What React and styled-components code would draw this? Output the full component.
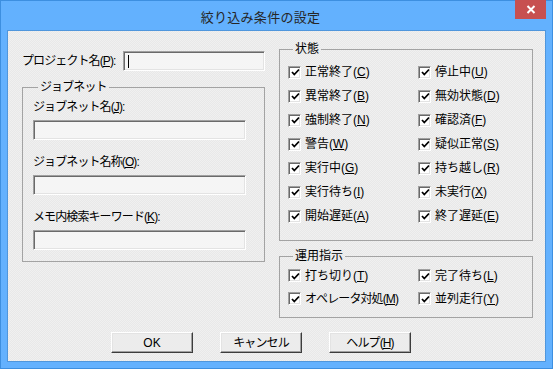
import React from 'react';
import styled, { createGlobalStyle } from 'styled-components';

const GlobalStyle = createGlobalStyle`
  body {
    margin: 0;
    font-family: "Liberation Sans", "Noto Sans CJK JP", sans-serif;
    font-size: 12px;
    color: #000;
  }
`;

const statusItems = [
  ['正常終了', 'C'],
  ['停止中', 'U'],
  ['異常終了', 'B'],
  ['無効状態', 'D'],
  ['強制終了', 'N'],
  ['確認済', 'F'],
  ['警告', 'W'],
  ['疑似正常', 'S'],
  ['実行中', 'G'],
  ['持ち越し', 'R'],
  ['実行待ち', 'I'],
  ['未実行', 'X'],
  ['開始遅延', 'A'],
  ['終了遅延', 'E']
];

const opItems = [
  ['打ち切り', 'T'],
  ['完了待ち', 'L'],
  ['オペレータ対処', 'M', true],
  ['並列走行', 'Y']
];

function Check({ label, keyChar, tight }) {
  return (
    <CheckRow>
      <Box>
        <svg width='9' height='9' viewBox='0 0 9 9'>
          <path d='M1 4 L3.3 6.5 L8 1.5' fill='none' stroke='#000' strokeWidth='1.8' />
        </svg>
      </Box>
      <CheckText $tight={tight}>
        {label}(<u>{keyChar}</u>)
      </CheckText>
    </CheckRow>
  );
}

function App() {
  return (
    <>
      <GlobalStyle />
      <Window>
        <TitleBar>
          <span />
          <Title>絞り込み条件の設定</Title>
          <CloseButton>
            <svg width='10' height='9' viewBox='0 0 10 9'>
              <path d='M1.5 1 L8.5 8 M8.5 1 L1.5 8' stroke='#fff' strokeWidth='2' />
            </svg>
          </CloseButton>
        </TitleBar>
        <Client>
          <Main>
            <LeftColumn>
              <ProjectRow>
                <ProjectLabel>
                  プロジェクト名(<u>P</u>):
                </ProjectLabel>
                <TextBox $w={142}>
                  <Caret />
                </TextBox>
              </ProjectRow>
              <JobnetGroup>
                <Legend $tight>ジョブネット</Legend>
                <FieldLabel>
                  ジョブネット名(<u>J</u>):
                </FieldLabel>
                <TextBox $w={213} />
                <FieldLabel>
                  ジョブネット名称(<u>O</u>):
                </FieldLabel>
                <TextBox $w={213} />
                <FieldLabel>
                  メモ内検索キーワード(<u>K</u>):
                </FieldLabel>
                <TextBox $w={213} />
              </JobnetGroup>
            </LeftColumn>
            <RightColumn>
              <StatusGroup>
                <Legend>状態</Legend>
                <CheckGrid $row={24}>
                  {statusItems.map(([l, k]) => (
                    <Check key={k} label={l} keyChar={k} />
                  ))}
                </CheckGrid>
              </StatusGroup>
              <OpGroup>
                <Legend>運用指示</Legend>
                <CheckGrid $row={23}>
                  {opItems.map(([l, k, t]) => (
                    <Check key={k} label={l} keyChar={k} tight={t} />
                  ))}
                </CheckGrid>
              </OpGroup>
            </RightColumn>
          </Main>
          <ButtonRow>
            <Button>OK</Button>
            <Button $tight>キャンセル</Button>
            <Button $tight>
              ヘルプ(<u>H</u>)
            </Button>
          </ButtonRow>
        </Client>
      </Window>
    </>
  );
}

export default App;

const Window = styled.div`
  width: 553px;
  height: 369px;
  box-sizing: border-box;
  background-color: #63b1fe;
  border: 1px solid #3d8fe0;
  display: flex;
  flex-direction: column;
`;

const TitleBar = styled.div`
  height: 29px;
  display: grid;
  grid-template-columns: 1fr auto 1fr;
  align-items: start;
  flex-shrink: 0;
`;

const Title = styled.div`
  font-family: "Noto Sans CJK JP", sans-serif;
  font-size: 13px;
  line-height: 15px;
  margin-top: 8px;
  margin-right: 32px;
  color: #262626;
  letter-spacing: 0.3px;
`;

const CloseButton = styled.div`
  justify-self: end;
  width: 31px;
  height: 19px;
  margin-top: -1px;
  margin-right: 6px;
  background-color: #c75050;
  display: flex;
  align-items: center;
  justify-content: center;
`;

const Client = styled.div`
  flex: 1;
  margin: 0 6px 6px 6px;
  border: 1px solid #4f96dc;
  background: repeating-conic-gradient(#f0f0f0 0% 25%, #e8e8e8 0% 50%) 0 0 / 2px 2px;
  padding: 11px 12px 0 14px;
  display: flex;
  flex-direction: column;
`;

const Main = styled.div`
  display: flex;
  gap: 14px;
  align-items: flex-start;
`;

const LeftColumn = styled.div`
  width: 243px;
  display: flex;
  flex-direction: column;
`;

const RightColumn = styled.div`
  width: 254px;
  display: flex;
  flex-direction: column;
`;

const ProjectRow = styled.div`
  display: flex;
  align-items: center;
  margin-top: 9px;
`;

const ProjectLabel = styled.span`
  width: 101px;
  white-space: nowrap;
  line-height: 14px;
  letter-spacing: -0.9px;
`;

const TextBox = styled.div`
  width: ${(p) => p.$w}px;
  height: 20px;
  flex-shrink: 0;
  box-sizing: border-box;
  background-color: #f5f5f5;
  border: 1px solid;
  border-color: #a0a0a0 #ffffff #ffffff #a0a0a0;
  box-shadow: inset 1px 1px #6a6a6a, inset -1px -1px #e3e3e3;
  margin-bottom: 15px;
  display: flex;
  align-items: center;
  padding-left: 4px;

  &:last-child {
    margin-bottom: 0;
  }
`;

const Caret = styled.span`
  width: 1px;
  height: 13px;
  background-color: #000;
`;

const Group = styled.fieldset`
  margin: 0;
  border: 1px solid #a3a3a3;
  min-width: 0;
`;

const Legend = styled.legend`
  padding: 0 2px;
  margin-left: 5px;
  line-height: 14px;
  letter-spacing: ${(p) => (p.$tight ? '-0.9px' : '0')};
`;

const JobnetGroup = styled(Group)`
  margin-top: 9px;
  padding: 6px 18px 11px 10px;
  display: flex;
  flex-direction: column;
`;

const FieldLabel = styled.span`
  line-height: 14px;
  margin-bottom: 6px;
  white-space: nowrap;
  letter-spacing: -0.9px;
`;

const StatusGroup = styled(Group)`
  padding: 4px 8px 12px 8px;
`;

const OpGroup = styled(Group)`
  margin-top: 8px;
  padding: 1px 8px 7px 8px;
`;

const CheckGrid = styled.div`
  display: grid;
  grid-template-columns: 130px 1fr;
  grid-auto-rows: ${(p) => p.$row}px;
  align-items: center;
`;

const CheckRow = styled.label`
  display: flex;
  align-items: center;
  gap: 4px;
  white-space: nowrap;
  line-height: 14px;
`;

const CheckText = styled.span`
  letter-spacing: ${(p) => (p.$tight ? '-0.9px' : '0')};
`;

const Box = styled.span`
  width: 13px;
  height: 13px;
  box-sizing: border-box;
  background-color: #fff;
  border: 1px solid;
  border-color: #a0a0a0 #ffffff #ffffff #a0a0a0;
  box-shadow: inset 1px 1px #696969, inset -1px -1px #e3e3e3;
  display: flex;
  align-items: center;
  justify-content: center;
  padding: 1px 0 0 1px;
  flex-shrink: 0;
`;

const ButtonRow = styled.div`
  display: flex;
  gap: 27px;
  margin-top: 14px;
  padding-left: 89px;
`;

const Button = styled.div`
  width: 82px;
  height: 21px;
  box-sizing: border-box;
  background-color: #ececec;
  border: 1px solid;
  border-color: #ffffff #3c3c3c #3c3c3c #ffffff;
  box-shadow: inset -1px -1px #a0a0a0, inset 1px 1px #e3e3e3;
  display: flex;
  align-items: center;
  justify-content: center;
  line-height: 14px;
  letter-spacing: ${(p) => (p.$tight ? '-0.9px' : '0')};
`;
